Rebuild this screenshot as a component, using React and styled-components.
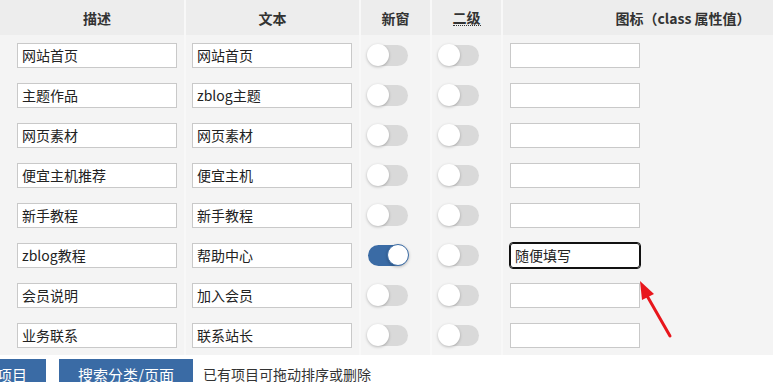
import styled, { createGlobalStyle } from "styled-components";

const GlobalStyle = createGlobalStyle`
  html, body {
    margin: 0;
    padding: 0;
    background: #fff;
    overflow: hidden;
  }
  body {
    font-family: "Noto Sans CJK SC", "Noto Sans", sans-serif;
    font-size: 14px;
    color: #333;
  }
`;

const Page = styled.div`
  position: relative;
  width: 900px;
`;

const Table = styled.div`
  display: flex;
  flex-direction: column;
  width: 863px;
`;

const Row = styled.div`
  display: grid;
  grid-template-columns: 184px 173px 69px 69px 360px;
  column-gap: 2px;
  background: #f8f8f8;
  height: ${(p) => (p.$head ? "35px" : "40px")};
`;

const HeadCell = styled.div`
  background: #ededed;
  display: flex;
  align-items: center;
  justify-content: center;
  font-weight: 700;
  color: #333;
  padding: ${(p) => (p.$first ? "0 0 0 10px" : "0")};
`;

const Abbr = styled.span`
  border-bottom: 1px dotted #333;
  line-height: 16px;
`;

const Cell = styled.div`
  background: #f4f4f4;
  display: flex;
  align-items: center;
  padding: ${(p) => (p.$first ? "0 7px 0 17px" : "0 7px 0 6px")};
`;

const TextInput = styled.input`
  box-sizing: border-box;
  width: ${(p) => (p.$narrow ? "130px" : "100%")};
  height: 25px;
  border: 1px solid ${(p) => (p.$focus ? "#111" : "#c9c9c9")};
  outline: ${(p) => (p.$focus ? "1px solid #111" : "none")};
  border-radius: ${(p) => (p.$focus ? "3px" : "0")};
  background: #fff;
  padding: 0 4px;
  font-family: "Noto Sans CJK SC", "Noto Sans", sans-serif;
  font-size: 14px;
  color: #222;
  margin-left: ${(p) => (p.$narrow ? "1px" : "0")};
`;

const Track = styled.div`
  position: relative;
  width: 40px;
  height: 21px;
  border-radius: 11px;
  background: ${(p) => (p.$on ? "#3a6ba5" : "#d9d9d9")};
  margin-left: 1px;
`;

const Knob = styled.div`
  position: absolute;
  top: -1px;
  left: ${(p) => (p.$on ? "19px" : "-1px")};
  width: 22px;
  height: 22px;
  border-radius: 50%;
  background: #fff;
  box-sizing: border-box;
  border: ${(p) => (p.$on ? "1px solid #3a6ba5" : "none")};
  box-shadow: 0 1px 3px rgba(0, 0, 0, 0.25);
`;

const Toolbar = styled.div`
  display: flex;
  align-items: center;
  gap: 13px;
  margin: 4px 0 0 -52px;
`;

const Button = styled.button`
  height: 30px;
  padding: 0 19px;
  border: none;
  background: #3a6ba5;
  color: #fff;
  font-family: "Noto Sans CJK SC", "Noto Sans", sans-serif;
  font-size: 15px;
`;

const Hint = styled.span`
  font-size: 14px;
  color: #333;
  margin-left: -3px;
`;

const Arrow = styled.svg`
  position: absolute;
  left: 630px;
  top: 272px;
`;

const rows = [
  ["网站首页", "网站首页", false, ""],
  ["主题作品", "zblog主题", false, ""],
  ["网页素材", "网页素材", false, ""],
  ["便宜主机推荐", "便宜主机", false, ""],
  ["新手教程", "新手教程", false, ""],
  ["zblog教程", "帮助中心", true, "随便填写"],
  ["会员说明", "加入会员", false, ""],
  ["业务联系", "联系站长", false, ""],
];

const Toggle = ({ on }) => (
  <Track $on={on}>
    <Knob $on={on} />
  </Track>
);

export default function App() {
  return (
    <Page>
      <GlobalStyle />
      <Table>
        <Row $head>
          <HeadCell $first>描述</HeadCell>
          <HeadCell>文本</HeadCell>
          <HeadCell>新窗</HeadCell>
          <HeadCell>
            <Abbr>二级</Abbr>
          </HeadCell>
          <HeadCell>图标（class 属性值）</HeadCell>
        </Row>
        {rows.map(([desc, text, on, icon], i) => (
          <Row key={i}>
            <Cell $first>
              <TextInput defaultValue={desc} />
            </Cell>
            <Cell>
              <TextInput defaultValue={text} />
            </Cell>
            <Cell>
              <Toggle on={on} />
            </Cell>
            <Cell>
              <Toggle on={false} />
            </Cell>
            <Cell>
              <TextInput $narrow $focus={!!icon} defaultValue={icon} />
            </Cell>
          </Row>
        ))}
      </Table>
      <Toolbar>
        <Button>添加项目</Button>
        <Button>搜索分类/页面</Button>
        <Hint>已有项目可拖动排序或删除</Hint>
      </Toolbar>
      <Arrow width="50" height="70" viewBox="0 0 50 70">
        <line x1="40" y1="64" x2="16" y2="22" stroke="#e8161c" strokeWidth="3" strokeLinecap="round" />
        <polygon points="10,9 24,22 12,28" fill="#e8161c" />
      </Arrow>
    </Page>
  );
}
